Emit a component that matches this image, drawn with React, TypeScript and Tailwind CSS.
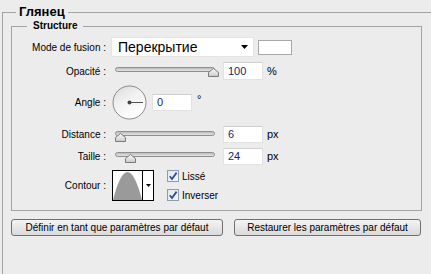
import React from "react";

const font = "font-['Liberation_Sans','Arial',sans-serif]";

const Thumb = () => (
  <svg width="11" height="9" viewBox="0 0 11 9">
    <defs>
      <linearGradient id="tg" x1="0" y1="0" x2="0" y2="1">
        <stop offset="0" stopColor="#ffffff" />
        <stop offset="1" stopColor="#c8c8c8" />
      </linearGradient>
    </defs>
    <polygon points="0.5,8.5 0.5,4.5 5.5,0.5 10.5,4.5 10.5,8.5" fill="url(#tg)" stroke="#7a7a7a" />
  </svg>
);

// slider: track 99px wide, thumb offset is the thumb's left edge
const Slider = ({ pos, trackTop, thumbTop }: { pos: number; trackTop: number; thumbTop: number }) => (
  <div className="relative w-[106px] h-[18px]">
    <div
      className="absolute left-[3px] w-[100px] h-[5px] rounded-full border border-[#8e8e8e] bg-gradient-to-b from-[#bdbdbd] to-[#e4e4e4]"
      style={{ top: trackTop }}
    />
    <div className="absolute" style={{ left: pos, top: thumbTop }}>
      <Thumb />
    </div>
  </div>
);

const NumInput = ({ value, w = 40, h = 18 }: { value: string; w?: number; h?: number }) => (
  <div
    className="bg-white border border-[#e2e2e2] border-t-[#cfcfcf] flex items-center pl-[4px] text-[11px] text-[#13286a]"
    style={{ width: w, height: h }}
  >
    {value}
  </div>
);

const Label = ({ children }: { children: React.ReactNode }) => (
  <div className="w-[94px] shrink-0 text-right text-[10px] text-black whitespace-nowrap">{children}</div>
);

const Check = ({ label }: { label: string }) => (
  <div className="flex items-center gap-[3px] text-[10px] text-black">
    <svg width="12" height="12" viewBox="0 0 12 12">
      <defs>
        <linearGradient id="cg" x1="0" y1="0" x2="1" y2="1">
          <stop offset="0" stopColor="#dfe6ef" />
          <stop offset="1" stopColor="#f7f9fb" />
        </linearGradient>
      </defs>
      <rect x="0.5" y="0.5" width="11" height="11" fill="url(#cg)" stroke="#8d9bb0" />
      <path d="M2.8 6.2 L5 9 L9.6 2.6" fill="none" stroke="#2f4e9e" strokeWidth="1.8" />
    </svg>
    <span>{label}</span>
  </div>
);

const Dial = () => (
  <svg width="35" height="35" viewBox="0 0 35 35">
    <defs>
      <linearGradient id="dg" x1="0" y1="0" x2="0.6" y2="1">
        <stop offset="0" stopColor="#d9d9d9" />
        <stop offset="0.5" stopColor="#f2f2f2" />
        <stop offset="1" stopColor="#ffffff" />
      </linearGradient>
    </defs>
    <circle cx="17.5" cy="17.5" r="16.5" fill="url(#dg)" stroke="#8a8a8a" />
    <line x1="17.5" y1="17.5" x2="31" y2="17.5" stroke="#555" strokeWidth="1" />
    <circle cx="17.5" cy="17.5" r="2" fill="#444" />
  </svg>
);

const Contour = () => (
  <div className="flex w-[42px] h-[31px] border border-black bg-white">
    <svg width="29" height="29" viewBox="0 0 29 29">
      <path d="M0 29 Q14.5 -27 29 29 Z" fill="#9a9a9a" />
    </svg>
    <div className="flex-1 border-l border-black flex items-center justify-center">
      <svg width="5" height="3" viewBox="0 0 5 3">
        <polygon points="0,0 5,0 2.5,3" fill="#000" />
      </svg>
    </div>
  </div>
);

const Button = ({ label, w }: { label: string; w: number }) => (
  <div
    className="h-[17px] rounded-[3px] border border-[#707070] bg-gradient-to-b from-[#f4f4f4] to-[#dadada] flex items-center justify-center text-[10px] text-black"
    style={{ width: w }}
  >
    {label}
  </div>
);

export default function App() {
  return (
    <div className={`w-[431px] h-[274px] bg-[#ececec] overflow-hidden pt-[4px] ${font}`}>
      <fieldset className="ml-[2px] w-[440px] h-[280px] border-l border-t border-[#a3a3a3]">
        <legend className="ml-[13px] px-[3px] text-[13px] leading-[16px] font-bold text-black">Глянец</legend>

        <fieldset className="ml-[8px] w-[411px] border border-[#a3a3a3] pt-[5px] pb-[9px]">
          <legend className="ml-[15px] px-[6px] text-[10px] leading-[12px] font-bold text-black">Structure</legend>

          <div className="flex items-center h-[20px]">
            <Label>Mode de fusion :</Label>
            <div className="ml-[5px] w-[143px] h-[20px] bg-white border border-[#e4e4e4] flex items-center justify-between pl-[6px] pr-[5px]">
              <span className="text-[14px] text-black">Перекрытие</span>
              <svg width="7" height="4" viewBox="0 0 7 4">
                <polygon points="0,0 7,0 3.5,4" fill="#000" />
              </svg>
            </div>
            <div className="ml-[4px] w-[34px] h-[15px] bg-white border border-[#a8a8a8]" />
          </div>

          <div className="flex items-center h-[18px] mt-[5px]">
            <Label>Opacité :</Label>
            <div className="ml-[6px]">
              <Slider pos={96} trackTop={5} thumbTop={6} />
            </div>
            <div className="ml-[5px]">
              <NumInput value="100" />
            </div>
            <span className="ml-[4px] text-[11px] text-black">%</span>
          </div>

          <div className="flex items-center h-[35px] mt-[5px]">
            <Label>Angle :</Label>
            <div className="ml-[6px]">
              <Dial />
            </div>
            <div className="ml-[5px]">
              <NumInput value="0" w={40} h={17} />
            </div>
            <span className="ml-[5px] self-start mt-[6px] text-[11px] text-black">°</span>
          </div>

          <div className="flex items-center h-[17px] mt-[6px]">
            <Label>Distance :</Label>
            <div className="ml-[6px]">
              <Slider pos={3} trackTop={5} thumbTop={7} />
            </div>
            <div className="ml-[5px]">
              <NumInput value="6" h={17} />
            </div>
            <span className="ml-[4px] text-[11px] text-black">px</span>
          </div>

          <div className="flex items-center h-[17px] mt-[5px]">
            <Label>Taille :</Label>
            <div className="ml-[6px]">
              <Slider pos={13} trackTop={4} thumbTop={6} />
            </div>
            <div className="ml-[5px]">
              <NumInput value="24" h={17} />
            </div>
            <span className="ml-[4px] text-[11px] text-black">px</span>
          </div>

          <div className="flex items-center h-[31px] mt-[5px]">
            <Label>Contour :</Label>
            <div className="ml-[6px]">
              <Contour />
            </div>
            <div className="ml-[13px] flex flex-col gap-[4px]">
              <Check label="Lissé" />
              <Check label="Inverser" />
            </div>
          </div>
        </fieldset>

        <div className="ml-[8px] mt-[8px] flex gap-[11px]">
          <Button label="Définir en tant que paramètres par défaut" w={212} />
          <Button label="Restaurer les paramètres par défaut" w={187} />
        </div>
      </fieldset>
    </div>
  );
}
